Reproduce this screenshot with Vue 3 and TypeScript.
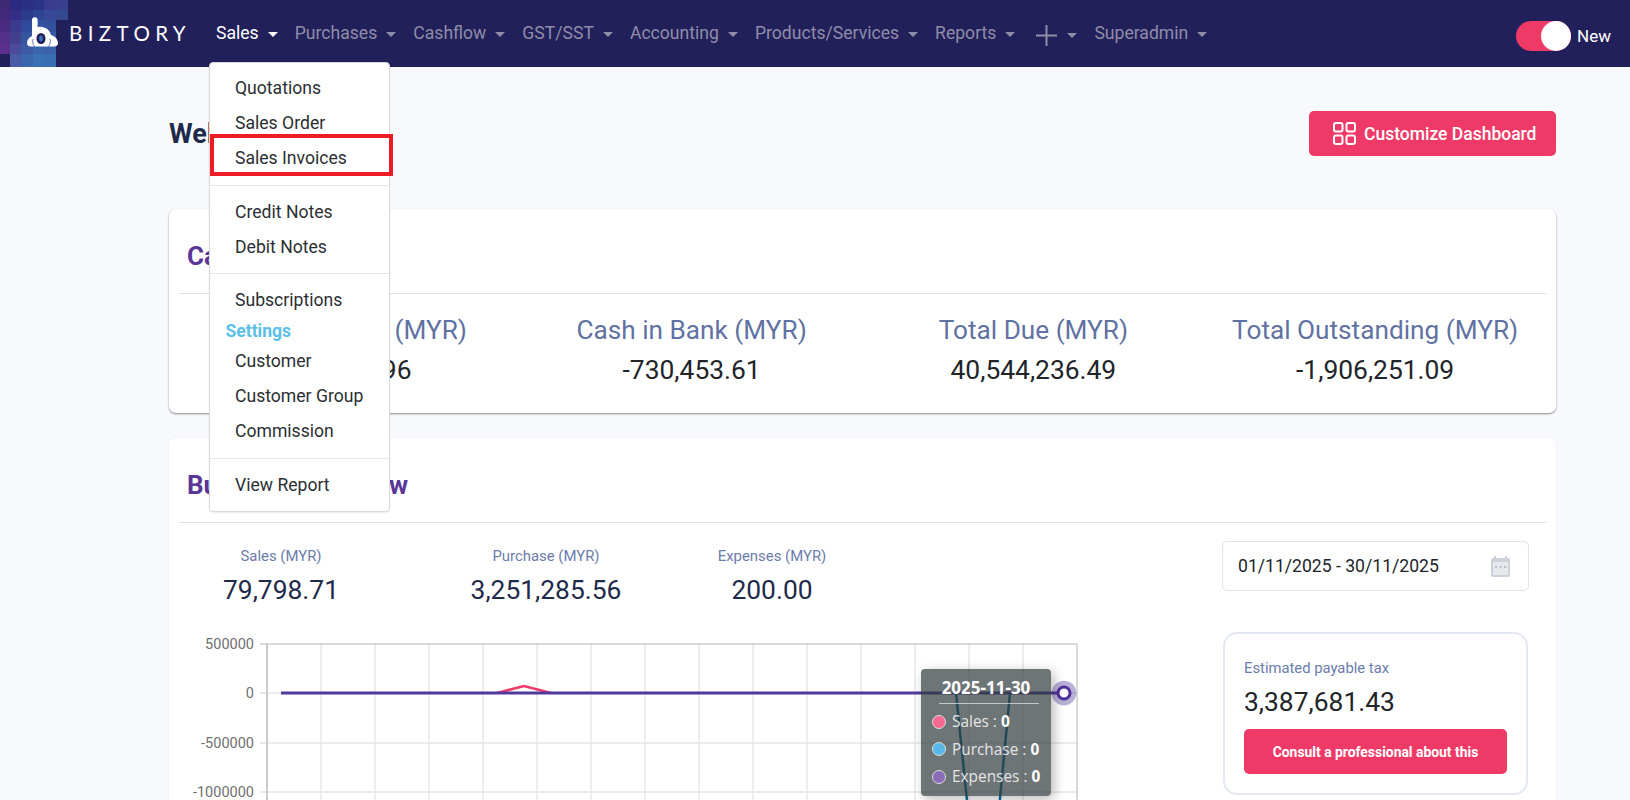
<script setup lang="ts">
const navItems: string[] = ['Purchases', 'Cashflow', 'GST/SST', 'Accounting', 'Products/Services', 'Reports']

interface Tile { x: number; y: number; w: number; h: number; c: string }
const xs = [0, 10, 21, 33, 44, 56, 68]
const ys = [0, 10, 20, 32, 44, 54, 67]
const colours: string[][] = [
  ['#3f2a75', '#2c2a80', '#2a2f85', '#2c3488', '#3a3c8f', '#3a4090'],
  ['#43297a', '#342e88', '#2c3a8c', '#2e4596', '#384797', '#34498f'],
  ['#4a2b7f', '#3b3b8e', '#2f4a9b', '#32519f', '#33509c', ''],
  ['#55308a', '#43408f', '#35559f', '#3559a6', '#355ba5', ''],
  ['#5a2f8e', '#4a4b9c', '#3c5ba6', '#3a64ad', '#3a62aa', ''],
  ['#22205a', '#4a5aa5', '#3a66ae', '#3a72b5', '#3a6eb3', ''],
  ['#6d4c9c', '#3573b4', '#3a80c2', '#3a78ba', '', '']
]
const tiles: Tile[] = []
colours.forEach((row, r) => row.forEach((c, i) => {
  if (c) tiles.push({ x: xs[i], y: ys[r], w: xs[i + 1] - xs[i], h: ys[r + 1] - ys[r], c })
}))

const stats = [
  { label: 'Cash in Hand (MYR)', value: '-24,115.96' },
  { label: 'Cash in Bank (MYR)', value: '-730,453.61' },
  { label: 'Total Due (MYR)', value: '40,544,236.49' },
  { label: 'Total Outstanding (MYR)', value: '-1,906,251.09' }
]
const flows = [
  { label: 'Sales (MYR)', value: '79,798.71' },
  { label: 'Purchase (MYR)', value: '3,251,285.56' },
  { label: 'Expenses (MYR)', value: '200.00' }
]
const gridX: number[] = Array.from({ length: 14 }, (_, i) => 321 + i * 54)
const gridY: number[] = [693, 743, 792]
const yLabels = [
  { t: '500000', y: 644 }, { t: '0', y: 693 }, { t: '-500000', y: 743 }, { t: '-1000000', y: 792 }
]
const tipRows = [
  { name: 'Sales', c: '#f56a90' },
  { name: 'Purchase', c: '#57b8e8' },
  { name: 'Expenses', c: '#8a6cb8' }
]
</script>

<template>
  <div class="page">
    <header class="topbar">
      <div class="brand">
        <svg class="mosaic" width="68" height="67" viewBox="0 0 68 67">
          <rect v-for="(t, i) in tiles" :key="i" :x="t.x" :y="t.y" :width="t.w" :height="t.h" :fill="t.c" />
          <path fill="#fff" d="M32 20a2.800 2.800 0 0 1 5.600 0v7a11 11 0 0 1 13.400 8c4 1 7 4.500 7 8 0 2.500-1.500 3.500-4 3.500H31c-2.500 0-4-1-4-3.500 0-3 2-5.500 5-7z" />
          <ellipse cx="41" cy="38.500" rx="4.500" ry="5.500" fill="#22205a" />
          <ellipse cx="41" cy="38.500" rx="1.800" ry="3" fill="#3a72b5" />
          <path d="M33 39c-1 3 0 6 2 8M50 39c1 3 0 6-2 8" stroke="#4a5aa5" stroke-width="0.800" fill="none" />
        </svg>
        <span class="wordmark">BIZTORY</span>
      </div>
      <nav class="nav">
        <a class="nav-item active">Sales<i class="caret"></i></a>
        <a v-for="n in navItems" :key="n" class="nav-item">{{ n }}<i class="caret"></i></a>
        <a class="nav-item plus-item">
          <svg width="21" height="21" viewBox="0 0 21 21"><path d="M10.500 0v21M0 10.500h21" stroke="#8f8ca8" stroke-width="2" /></svg>
          <i class="caret"></i>
        </a>
        <a class="nav-item">Superadmin<i class="caret"></i></a>
      </nav>
      <div class="switch-wrap">
        <span class="switch"><span class="knob"></span></span>
        <span class="new">New</span>
      </div>
    </header>

    <div class="dropdown">
      <a class="menu-item">Quotations</a>
      <a class="menu-item">Sales Order</a>
      <a class="menu-item">Sales Invoices</a>
      <hr class="sep" />
      <a class="menu-item">Credit Notes</a>
      <a class="menu-item">Debit Notes</a>
      <hr class="sep" />
      <a class="menu-item">Subscriptions</a>
      <div class="menu-head">Settings</div>
      <a class="menu-item">Customer</a>
      <a class="menu-item">Customer Group</a>
      <a class="menu-item">Commission</a>
      <hr class="sep" />
      <a class="menu-item">View Report</a>
      <div class="highlight"></div>
    </div>

    <main class="main">
      <div class="welcome-row">
        <h1 class="welcome">Welcome Admin</h1>
        <button class="customize">
          <svg width="23" height="23" viewBox="0 0 23 23" fill="none" stroke="#fff" stroke-width="2">
            <rect x="1" y="1" width="8.500" height="8.500" rx="2" />
            <rect x="13.500" y="1" width="8.500" height="8.500" rx="2" />
            <rect x="1" y="13.500" width="8.500" height="8.500" rx="2" />
            <rect x="13.500" y="13.500" width="8.500" height="8.500" rx="2" />
          </svg>
          Customize Dashboard
        </button>
      </div>

      <section class="card first">
        <h2 class="card-title">Cash Summary</h2>
        <div class="stats">
          <div v-for="s in stats" :key="s.label" class="stat">
            <div class="stat-label">{{ s.label }}</div>
            <div class="stat-value">{{ s.value }}</div>
          </div>
        </div>
      </section>

      <section class="card second">
        <h2 class="card-title">Business Overview</h2>
        <div class="overview">
          <div class="left">
            <div class="flows">
              <div v-for="f in flows" :key="f.label" class="flow">
                <div class="flow-label">{{ f.label }}</div>
                <div class="flow-value">{{ f.value }}</div>
              </div>
            </div>
            <div class="chart">
              <svg class="chart-svg" width="920" height="200" viewBox="179 620 920 200">
                <rect x="267" y="644" width="810" height="170" fill="#fff" />
                <path v-for="x in gridX" :key="x" :d="`M${x} 644V820`" stroke="#dcdcdc" stroke-width="1" />
                <path v-for="y in gridY" :key="y" :d="`M267 ${y}H1077`" stroke="#e4e4e4" stroke-width="1.500" />
                <path d="M260 644H1077M1077 644V820" stroke="#b5b5b5" stroke-width="1" fill="none" />
                <path d="M267 644V820" stroke="#b8b8b8" stroke-width="1.500" />
                <path v-for="y in gridY" :key="'t' + y" :d="`M260 ${y}H267`" stroke="#d0d0d0" stroke-width="1" />
                <text v-for="l in yLabels" :key="l.t" class="y-label" x="254" :y="l.y + 5" text-anchor="end">{{ l.t }}</text>
                <path d="M956 693L970 830M1010 693L997 830" stroke="#0e6b9b" stroke-width="2.500" fill="none" />
                <path d="M497 693L524 686L551 693" stroke="#ef3a68" stroke-width="2.500" fill="none" />
                <path d="M281 693H1064" stroke="#4f3a9b" stroke-width="3" fill="none" />
                <circle cx="1064" cy="693" r="12.300" fill="#4f3a9b" opacity="0.4" />
                <circle cx="1064" cy="693" r="6" fill="#fff" stroke="#4f2f9b" stroke-width="3" />
              </svg>
              <div class="tooltip">
                <div class="tip-date">2025-11-30</div>
                <div class="tip-rule"></div>
                <div v-for="r in tipRows" :key="r.name" class="tip-row">
                  <span class="tip-dot" :style="{ background: r.c }"></span>
                  <span>{{ r.name }} : <b>0</b></span>
                </div>
              </div>
            </div>
          </div>
          <aside class="right">
            <div class="date-input">
              <span>01/11/2025 - 30/11/2025</span>
              <svg width="19" height="21" viewBox="0 0 19 21">
                <path fill="#ccd1d9" d="M3 0h2v2h9V0h2v2h1a2 2 0 0 1 2 2v15a2 2 0 0 1-2 2H2a2 2 0 0 1-2-2V4a2 2 0 0 1 2-2h1z" />
                <rect x="2" y="6" width="15" height="13" fill="#fff" opacity="0.5" />
                <path d="M4 11h2M8.500 11h2M13 11h2" stroke="#aab1bb" stroke-width="1.500" />
              </svg>
            </div>
            <div class="tax-card">
              <div class="tax-label">Estimated payable tax</div>
              <div class="tax-value">3,387,681.43</div>
              <button class="consult">Consult a professional about this</button>
            </div>
          </aside>
        </div>
      </section>
    </main>
  </div>
</template>

<style>
html, body { margin: 0; height: 800px; overflow: hidden; background: #f8f9fd; }
</style>

<style scoped>
.page { position: relative; height: 800px; overflow: hidden; font-family: Roboto, "Liberation Sans", sans-serif; color: #212529; background: #f8f9fd; }
.topbar { height: 67px; background: #22205a; display: flex; align-items: center; position: relative; overflow: hidden; }
.brand { width: 216px; height: 67px; flex: none; display: flex; align-items: center; }
.mosaic { display: block; flex: none; }
.wordmark { margin-left: 1px; margin-top: -1px; font-family: Lato, sans-serif; font-size: 20.500px; letter-spacing: 5.400px; color: #fff; }
.nav { display: flex; align-items: center; height: 67px; margin-top: -1px; flex: 1; }
.nav-item { display: flex; align-items: center; font-size: 17.600px; color: #8f8ca8; margin-right: 17px; white-space: nowrap; }
.nav-item.active { color: #fff; }
.caret { display: inline-block; width: 0; height: 0; margin-left: 9px; margin-top: 3px; border-left: 5px solid transparent; border-right: 5px solid transparent; border-top: 5px solid currentColor; }
.plus-item { margin-left: 4px; margin-right: 17px; padding-top: 4px; }
.plus-item .caret { margin-left: 10px; margin-top: 0; }
.switch-wrap { display: flex; align-items: center; margin-right: 19px; margin-top: 5px; }
.switch { width: 55px; height: 30px; border-radius: 15px; background: #ef3a68; position: relative; display: block; }
.knob { position: absolute; right: 0; top: 0; width: 30px; height: 30px; border-radius: 50%; background: #fff; }
.new { margin-left: 6px; font-size: 17px; color: #fff; }

.dropdown { position: absolute; left: 209px; top: 62px; width: 181px; height: 450px; box-sizing: border-box; padding-top: 8px; background: #fff; border: 1px solid #d9d9de; border-radius: 4px; box-shadow: 0 1px 2px rgba(0, 0, 0, .08); z-index: 5; }
.menu-item { display: block; height: 34.900px; line-height: 34.900px; padding-left: 25px; font-size: 17.600px; color: #2b2f33; }
.sep { border: 0; border-top: 1px solid #e6e6e9; margin: 9px 0; }
.menu-head { height: 26px; line-height: 26px; padding-left: 15.500px; font-size: 17.500px; font-weight: 700; color: #5bc0e6; }
.highlight { position: absolute; left: 0; top: 71px; width: 183px; height: 42px; box-sizing: border-box; border: 4.500px solid #ed1c24; }

.main { padding: 44px 74px 0 169px; }
.welcome-row { display: flex; justify-content: space-between; align-items: center; height: 45px; margin-bottom: 53px; }
.welcome { margin: 0; font-size: 27px; font-weight: 700; color: #1e2a4a; }
.customize { display: flex; align-items: center; gap: 8px; width: 247px; height: 45px; padding: 0 0 0 24px; border: 0; border-radius: 5px; background: #ef3a68; color: #fff; font: 500 17.500px Roboto, sans-serif; white-space: nowrap; }
.card { background: #fff; border-radius: 7px; padding: 0 10px; }
.card.first { height: 204px; box-shadow: 0 1px 2px rgba(0, 0, 0, .45); margin-bottom: 25px; }
.card.second { height: 420px; box-shadow: 0 0 3px rgba(0, 0, 0, .05); }
.card-title { margin: 0; height: 74px; line-height: 74px; padding: 10px 0 0 8px; border-bottom: 1px solid #e2e2e6; font-size: 26px; font-weight: 700; color: #5a3696; }
.stats { display: grid; grid-template-columns: repeat(4, 1fr); padding-top: 20px; text-align: center; }
.stat-label { font-size: 26.200px; line-height: 32px; color: #5f72a3; }
.stat-value { margin-top: 8px; font-size: 26.400px; line-height: 32px; color: #212529; }
.overview { display: flex; }
.left { flex: 1; min-width: 0; }
.flows { display: grid; grid-template-columns: 204px 326px 126px; padding-top: 23px; text-align: center; }
.flow-label { font-size: 14.900px; line-height: 20px; color: #6b7cab; white-space: nowrap; }
.flow-value { margin-top: 8px; font-size: 26.400px; line-height: 32px; color: #1e2a4a; white-space: nowrap; }
.chart { position: relative; margin-top: 14px; height: 200px; }
.chart-svg { display: block; }
.y-label { font: 14.500px Roboto, sans-serif; fill: #707070; }
.tooltip { position: absolute; left: 742px; top: 49px; width: 130px; height: 127px; box-sizing: border-box; padding: 10px 0 0 11px; border-radius: 4px; background: rgba(49, 58, 61, .7); box-shadow: 3px 3px 12px rgba(0, 0, 0, .28); color: #e4e4e4; font: 15.400px "Open Sans", sans-serif; }
.tip-date { width: 108px; text-align: center; font-weight: 700; font-size: 17px; line-height: 18px; color: #fff; }
.tip-rule { width: 100px; margin: 6px 0 0 7px; border-top: 1px solid rgba(255, 255, 255, .6); }
.tip-row { display: flex; align-items: center; height: 27.500px; gap: 6px; white-space: nowrap; }
.tip-row:nth-child(3) { margin-top: 4px; }
.tip-row b { color: #fff; }
.tip-dot { width: 12px; height: 12px; border-radius: 50%; border: 1px solid #ddd; flex: none; }
.right { width: 307px; flex: none; margin-right: 17px; padding-top: 18px; }
.date-input { height: 50px; box-sizing: border-box; display: flex; align-items: center; justify-content: space-between; padding: 0 18px 0 15px; border: 1px solid #e0e3ea; border-radius: 5px; font-size: 17.600px; color: #212529; background: #fff; }
.tax-card { margin: 41px 1px 0; height: 163px; box-sizing: border-box; padding: 24px 19px 0; border: 2px solid #e3e8f3; border-radius: 14px; background: #fff; }
.tax-label { font-size: 14.800px; line-height: 20px; color: #6b7cab; }
.tax-value { margin-top: 8px; font-size: 26.400px; line-height: 32px; color: #212529; }
.consult { display: block; width: 100%; height: 45px; margin-top: 11px; border: 0; border-radius: 5px; background: #ef3a68; color: #fff; font: 700 13.900px Roboto, sans-serif; }
</style>
